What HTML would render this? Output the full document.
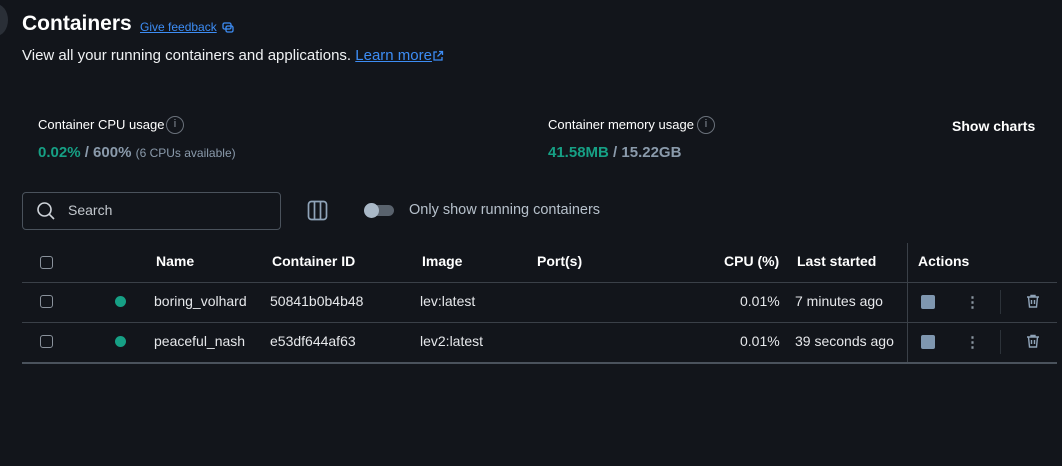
<!DOCTYPE html>
<html><head><meta charset="utf-8"><style>
*{margin:0;padding:0;box-sizing:border-box}
body{width:1062px;height:466px;background:#12151b;color:#fff;font-family:"Liberation Sans",sans-serif;position:relative;overflow:hidden}
.a{position:absolute;white-space:nowrap}
.h{font-weight:bold;font-size:14px}
.c{font-size:14px;color:#e6e8eb}
.line{position:absolute;height:1px;background:#3a4048}
.cb{position:absolute;width:13px;height:13px;border:1.5px solid #8a929c;border-radius:3px}
.dot{position:absolute;width:11px;height:11px;border-radius:50%;background:#16a085}
.sq{position:absolute;width:14px;height:14px;border-radius:2px;background:#7f97b0}
</style></head><body>
<div class="a" style="left:-16px;top:4px;width:24px;height:32px;border-radius:50%;background:#2a2f37"></div>
<div class="a" style="left:22px;top:12px;font-size:21px;font-weight:bold">Containers</div>
<div class="a" style="left:140px;top:20px;font-size:12px;color:#3d8df5;text-decoration:underline">Give feedback</div>
<svg class="a" style="left:222px;top:22px" width="12" height="12" viewBox="0 0 12 12" fill="none" stroke="#3d8df5" stroke-width="1.3"><rect x="1" y="1" width="8" height="6" rx="1.5"/><rect x="4" y="4" width="7" height="6" rx="1.5"/></svg>
<div class="a" style="left:22px;top:47px;font-size:15px;color:#f0f2f4">View all your running containers and applications. <span style="color:#3d8df5;text-decoration:underline">Learn more</span></div>
<svg class="a" style="left:432px;top:50px" width="12" height="12" viewBox="0 0 12 12" fill="none" stroke="#3d8df5" stroke-width="1.3"><path d="M5 2H2v8h8V7M7 1.5h3.5V5M10.5 1.5 5.5 6.5"/></svg>

<div class="a" style="left:38px;top:117px;font-size:13px">Container CPU usage</div>
<div class="a" style="left:166px;top:116px;width:18px;height:18px;border:1.5px solid #6a717b;border-radius:50%;color:#8a919b;font-size:11px;text-align:center;line-height:15px">i</div>
<div class="a" style="left:38px;top:144px;font-size:15px;font-weight:bold;color:#16a085">0.02% <span style="color:#8a9aab">/ 600%</span> <span style="font-size:12px;font-weight:normal;color:#8a9aab">(6 CPUs available)</span></div>
<div class="a" style="left:548px;top:117px;font-size:13px">Container memory usage</div>
<div class="a" style="left:697px;top:116px;width:18px;height:18px;border:1.5px solid #6a717b;border-radius:50%;color:#8a919b;font-size:11px;text-align:center;line-height:15px">i</div>
<div class="a" style="left:548px;top:144px;font-size:15px;font-weight:bold;color:#16a085">41.58MB <span style="color:#8a9aab">/ 15.22GB</span></div>
<div class="a" style="left:952px;top:118px;font-size:14px;font-weight:bold">Show charts</div>

<div class="a" style="left:22px;top:192px;width:259px;height:38px;border:1px solid #4a525c;border-radius:4px"></div>
<svg class="a" style="left:36px;top:201px" width="20" height="20" viewBox="0 0 20 20" fill="none" stroke="#cfd4da" stroke-width="1.6"><circle cx="8.5" cy="8.5" r="6.5"/><path d="M13.2 13.2 18 18"/></svg>
<div class="a" style="left:68px;top:202px;font-size:14px;color:#c3c8ce">Search</div>
<svg class="a" style="left:307px;top:200px" width="21" height="21" viewBox="0 0 21 21" fill="none" stroke="#8fa3b8" stroke-width="1.7"><rect x="1.5" y="1.5" width="18" height="18" rx="3"/><path d="M7.5 1.5v18M13.5 1.5v18"/></svg>
<div class="a" style="left:365px;top:205px;width:29px;height:11px;border-radius:6px;background:#59626d"></div>
<div class="a" style="left:364px;top:203px;width:15px;height:15px;border-radius:50%;background:#a9b8c7"></div>
<div class="a" style="left:409px;top:202px;font-size:14.5px;color:#b6c0cb">Only show running containers</div>

<div class="cb" style="left:40px;top:256px"></div>
<div class="a h" style="left:156px;top:253px">Name</div>
<div class="a h" style="left:272px;top:253px">Container ID</div>
<div class="a h" style="left:422px;top:253px">Image</div>
<div class="a h" style="left:537px;top:253px">Port(s)</div>
<div class="a h" style="left:724px;top:253px">CPU (%)</div>
<div class="a h" style="left:797px;top:253px">Last started</div>
<div class="a h" style="left:918px;top:253px">Actions</div>
<div class="a" style="left:907px;top:243px;width:1px;height:120px;background:#3a4048"></div>
<div class="line" style="left:22px;top:282px;width:1035px"></div>

<div class="cb" style="left:40px;top:295px"></div>
<div class="dot" style="left:115px;top:296px"></div>
<div class="a c" style="left:154px;top:293px">boring_volhard</div>
<div class="a c" style="left:270px;top:293px">50841b0b4b48</div>
<div class="a c" style="left:420px;top:293px">lev:latest</div>
<div class="a c" style="left:740px;top:293px">0.01%</div>
<div class="a c" style="left:795px;top:293px">7 minutes ago</div>
<div class="sq" style="left:921px;top:295px"></div>
<div class="a" style="left:965px;top:293px;color:#8a95a1;font-size:15px;font-weight:bold">⋮</div>
<div class="a" style="left:1000px;top:290px;width:1px;height:24px;background:#2c3239"></div>
<svg class="a" style="left:1026px;top:294px" width="14" height="14" viewBox="0 0 14 14" fill="none" stroke="#8fa3b8" stroke-width="1.4"><path d="M1 3h12M5 3V1.5h4V3M2.5 3l1 10h7l1-10M5.5 6v4M8.5 6v4"/></svg>
<div class="line" style="left:22px;top:322px;width:1035px"></div>

<div class="cb" style="left:40px;top:335px"></div>
<div class="dot" style="left:115px;top:336px"></div>
<div class="a c" style="left:154px;top:333px">peaceful_nash</div>
<div class="a c" style="left:270px;top:333px">e53df644af63</div>
<div class="a c" style="left:420px;top:333px">lev2:latest</div>
<div class="a c" style="left:740px;top:333px">0.01%</div>
<div class="a c" style="left:795px;top:333px">39 seconds ago</div>
<div class="sq" style="left:921px;top:335px"></div>
<div class="a" style="left:965px;top:333px;color:#8a95a1;font-size:15px;font-weight:bold">⋮</div>
<div class="a" style="left:1000px;top:330px;width:1px;height:24px;background:#2c3239"></div>
<svg class="a" style="left:1026px;top:334px" width="14" height="14" viewBox="0 0 14 14" fill="none" stroke="#8fa3b8" stroke-width="1.4"><path d="M1 3h12M5 3V1.5h4V3M2.5 3l1 10h7l1-10M5.5 6v4M8.5 6v4"/></svg>
<div class="line" style="left:22px;top:362px;width:1035px;height:2px;background:#4a525c"></div>
</body></html>
